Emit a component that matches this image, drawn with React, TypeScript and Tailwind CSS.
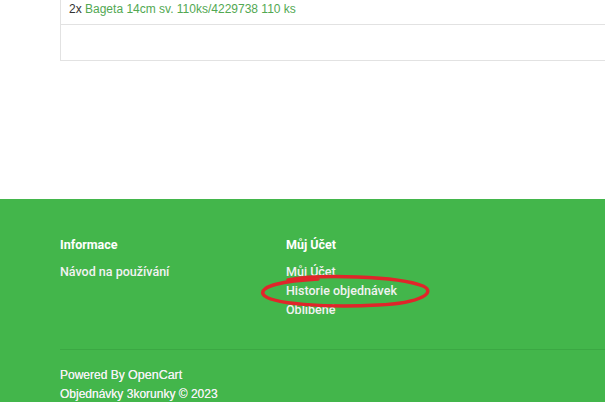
import React from 'react';

const App: React.FC = () => {
    return (
        <div className="w-[605px] h-[402px] overflow-hidden bg-white relative font-['Liberation_Sans',Arial,sans-serif]">
            <div className="h-[199px] pl-[60px]">
                <div className="w-[560px] border border-t-0 border-[#e2e2e2]">
                    <div className="h-[25px] pl-[8px] pt-[1px] text-[12px] leading-[16px] border-b border-[#e2e2e2]">
                        <span className="text-[#333]">2x </span>
                        <span className="text-[#52a852]">Bageta 14cm sv. 110ks/4229738 110 ks</span>
                    </div>
                    <div className="h-[35px]" />
                </div>
            </div>
            <footer className="h-[203px] bg-[#43b64b] text-[#f2f2f2] pl-[60px]">
                <div className="flex pt-[38px]">
                    <div className="w-[226px]">
                        <h5 className="font-['Roboto',sans-serif] font-bold text-[12.5px] leading-[16px] text-white">Informace</h5>
                        <ul className="mt-[9px] font-['Roboto',sans-serif] font-medium text-[12.5px] leading-[19px]">
                            <li>Návod na používání</li>
                        </ul>
                    </div>
                    <div>
                        <h5 className="font-['Roboto',sans-serif] font-bold text-[12.5px] leading-[16px] text-white">Můj Účet</h5>
                        <ul className="mt-[9px] font-['Roboto',sans-serif] font-medium text-[12.5px] leading-[19px]">
                            <li>Můj Účet</li>
                            <li>Historie objednávek</li>
                            <li>Oblíbené</li>
                        </ul>
                    </div>
                </div>
                <hr className="mt-[30px] border-0 border-t border-[#3ba843]" />
                <div className="pt-[16px] text-[12px] leading-[19px] [text-shadow:0_0_0.4px_#f2f2f2]">
                    <p>Powered By <span className="text-[12.5px]">OpenCart</span></p>
                    <p>Objednávky 3korunky © 2023</p>
                </div>
            </footer>
            <svg className="absolute left-[258px] top-[274px]" width="175" height="36" viewBox="0 0 175 36">
                <path d="M 30 6 C 60 0, 140 2, 165 12 C 178 18, 165 29, 120 31 C 70 34, 10 30, 5 20 C 2 12, 25 7, 60 5" fill="none" stroke="#e0252a" strokeWidth="3.5" strokeLinecap="round" />
            </svg>
        </div>
    );
};

export default App;
